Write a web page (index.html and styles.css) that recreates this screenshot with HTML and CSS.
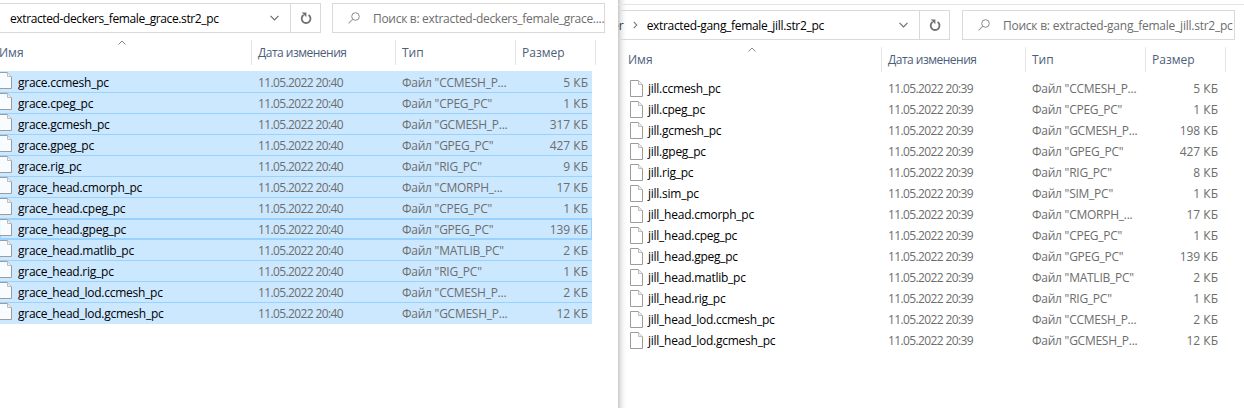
FILE: index.html
```html
<!DOCTYPE html>
<html lang="ru">
<head>
<meta charset="utf-8">
<title>Explorer</title>
<link rel="stylesheet" href="styles.css">
</head>
<body>
<svg class="defs" width="0" height="0" aria-hidden="true"><symbol id="file" viewBox="0 0 13 17"><path d="M.5 .5H8.5L12.5 4.5V16.5H.5Z" fill="#fff" fill-opacity=".85" stroke="#9c9c9c"/><path d="M8.5 .5V4.5H12.5" fill="#f0f0f0" stroke="#bdbdbd"/></symbol></svg>
<main class="desk">
<section class="win win-left">
  <div class="toolbar">
    <div class="addr"><span class="path">extracted-deckers_female_grace.str2_pc</span>
      <svg class="chev" width="9" height="6" viewBox="0 0 9 6"><path d="M.5 .8 4.5 4.8 8.5 .8" fill="none" stroke="#6d6d6d" stroke-width="1.2"/></svg></div>
    <div class="refresh"><svg width="12" height="13" viewBox="0 0 12 13"><path d="M3.6 3A4.4 4.4 0 1 0 8.6 3" fill="none" stroke="#707070" stroke-width="1.8"/><path d="M1.8 .6H6.4V5.2Z" fill="#707070"/></svg></div>
    <div class="search"><svg class="lens" width="12" height="12" viewBox="0 0 12 12"><circle cx="7.5" cy="4.5" r="3.8" fill="none" stroke="#8a8a8a"/><path d="M4.8 7.2 .6 11.4" stroke="#b09a9a" stroke-width="1.1"/></svg><span class="hint">Поиск в: extracted-deckers_female_grace....</span></div>
  </div>
  <div class="head">
    <span class="h h-name">Имя<svg class="sort" width="8" height="5" viewBox="0 0 8 5"><path d="M.5 4.5 4 1 7.5 4.5" fill="none" stroke="#8a8a8a"/></svg></span><span class="h h-date">Дата изменения</span><span class="h">Тип</span><span class="h">Размер</span>
  </div>
  <div class="list">
    <div class="row sel"><svg class="file"><use href="#file"/></svg><span class="n">grace.ccmesh_pc</span><span class="d">11.05.2022 20:40</span><span class="t">Файл "CCMESH_P...</span><span class="s">5 КБ</span></div>
    <div class="row sel"><svg class="file"><use href="#file"/></svg><span class="n">grace.cpeg_pc</span><span class="d">11.05.2022 20:40</span><span class="t">Файл "CPEG_PC"</span><span class="s">1 КБ</span></div>
    <div class="row sel"><svg class="file"><use href="#file"/></svg><span class="n">grace.gcmesh_pc</span><span class="d">11.05.2022 20:40</span><span class="t">Файл "GCMESH_P...</span><span class="s">317 КБ</span></div>
    <div class="row sel"><svg class="file"><use href="#file"/></svg><span class="n">grace.gpeg_pc</span><span class="d">11.05.2022 20:40</span><span class="t">Файл "GPEG_PC"</span><span class="s">427 КБ</span></div>
    <div class="row sel"><svg class="file"><use href="#file"/></svg><span class="n">grace.rig_pc</span><span class="d">11.05.2022 20:40</span><span class="t">Файл "RIG_PC"</span><span class="s">9 КБ</span></div>
    <div class="row sel"><svg class="file"><use href="#file"/></svg><span class="n">grace_head.cmorph_pc</span><span class="d">11.05.2022 20:40</span><span class="t">Файл "CMORPH_...</span><span class="s">17 КБ</span></div>
    <div class="row sel"><svg class="file"><use href="#file"/></svg><span class="n">grace_head.cpeg_pc</span><span class="d">11.05.2022 20:40</span><span class="t">Файл "CPEG_PC"</span><span class="s">1 КБ</span></div>
    <div class="row sel focus"><svg class="file"><use href="#file"/></svg><span class="n">grace_head.gpeg_pc</span><span class="d">11.05.2022 20:40</span><span class="t">Файл "GPEG_PC"</span><span class="s">139 КБ</span></div>
    <div class="row sel"><svg class="file"><use href="#file"/></svg><span class="n">grace_head.matlib_pc</span><span class="d">11.05.2022 20:40</span><span class="t">Файл "MATLIB_PC"</span><span class="s">2 КБ</span></div>
    <div class="row sel"><svg class="file"><use href="#file"/></svg><span class="n">grace_head.rig_pc</span><span class="d">11.05.2022 20:40</span><span class="t">Файл "RIG_PC"</span><span class="s">1 КБ</span></div>
    <div class="row sel"><svg class="file"><use href="#file"/></svg><span class="n">grace_head_lod.ccmesh_pc</span><span class="d">11.05.2022 20:40</span><span class="t">Файл "CCMESH_P...</span><span class="s">2 КБ</span></div>
    <div class="row sel"><svg class="file"><use href="#file"/></svg><span class="n">grace_head_lod.gcmesh_pc</span><span class="d">11.05.2022 20:40</span><span class="t">Файл "GCMESH_P...</span><span class="s">12 КБ</span></div>
  </div>
</section>
<section class="win win-right">
  <div class="toolbar">
    <div class="addr"><span class="crumb">er</span><svg class="crumb-sep" width="5" height="8" viewBox="0 0 5 8"><path d="M.8 .8 3.8 4 .8 7.2" fill="none" stroke="#7a7a7a" stroke-width="1.1"/></svg><span class="path">extracted-gang_female_jill.str2_pc</span>
      <svg class="chev" width="9" height="6" viewBox="0 0 9 6"><path d="M.5 .8 4.5 4.8 8.5 .8" fill="none" stroke="#6d6d6d" stroke-width="1.2"/></svg></div>
    <div class="refresh"><svg width="12" height="13" viewBox="0 0 12 13"><path d="M3.6 3A4.4 4.4 0 1 0 8.6 3" fill="none" stroke="#707070" stroke-width="1.8"/><path d="M1.8 .6H6.4V5.2Z" fill="#707070"/></svg></div>
    <div class="search"><svg class="lens" width="12" height="12" viewBox="0 0 12 12"><circle cx="7.5" cy="4.5" r="3.8" fill="none" stroke="#8a8a8a"/><path d="M4.8 7.2 .6 11.4" stroke="#b09a9a" stroke-width="1.1"/></svg><span class="hint">Поиск в: extracted-gang_female_jill.str2_pc</span></div>
  </div>
  <div class="head">
    <span class="h h-name">Имя<svg class="sort" width="8" height="5" viewBox="0 0 8 5"><path d="M.5 4.5 4 1 7.5 4.5" fill="none" stroke="#8a8a8a"/></svg></span><span class="h h-date">Дата изменения</span><span class="h">Тип</span><span class="h">Размер</span>
  </div>
  <div class="list">
    <div class="row"><svg class="file"><use href="#file"/></svg><span class="n">jill.ccmesh_pc</span><span class="d">11.05.2022 20:39</span><span class="t">Файл "CCMESH_P...</span><span class="s">5 КБ</span></div>
    <div class="row"><svg class="file"><use href="#file"/></svg><span class="n">jill.cpeg_pc</span><span class="d">11.05.2022 20:39</span><span class="t">Файл "CPEG_PC"</span><span class="s">1 КБ</span></div>
    <div class="row"><svg class="file"><use href="#file"/></svg><span class="n">jill.gcmesh_pc</span><span class="d">11.05.2022 20:39</span><span class="t">Файл "GCMESH_P...</span><span class="s">198 КБ</span></div>
    <div class="row"><svg class="file"><use href="#file"/></svg><span class="n">jill.gpeg_pc</span><span class="d">11.05.2022 20:39</span><span class="t">Файл "GPEG_PC"</span><span class="s">427 КБ</span></div>
    <div class="row"><svg class="file"><use href="#file"/></svg><span class="n">jill.rig_pc</span><span class="d">11.05.2022 20:39</span><span class="t">Файл "RIG_PC"</span><span class="s">8 КБ</span></div>
    <div class="row"><svg class="file"><use href="#file"/></svg><span class="n">jill.sim_pc</span><span class="d">11.05.2022 20:39</span><span class="t">Файл "SIM_PC"</span><span class="s">1 КБ</span></div>
    <div class="row"><svg class="file"><use href="#file"/></svg><span class="n">jill_head.cmorph_pc</span><span class="d">11.05.2022 20:39</span><span class="t">Файл "CMORPH_...</span><span class="s">17 КБ</span></div>
    <div class="row"><svg class="file"><use href="#file"/></svg><span class="n">jill_head.cpeg_pc</span><span class="d">11.05.2022 20:39</span><span class="t">Файл "CPEG_PC"</span><span class="s">1 КБ</span></div>
    <div class="row"><svg class="file"><use href="#file"/></svg><span class="n">jill_head.gpeg_pc</span><span class="d">11.05.2022 20:39</span><span class="t">Файл "GPEG_PC"</span><span class="s">139 КБ</span></div>
    <div class="row"><svg class="file"><use href="#file"/></svg><span class="n">jill_head.matlib_pc</span><span class="d">11.05.2022 20:39</span><span class="t">Файл "MATLIB_PC"</span><span class="s">2 КБ</span></div>
    <div class="row"><svg class="file"><use href="#file"/></svg><span class="n">jill_head.rig_pc</span><span class="d">11.05.2022 20:39</span><span class="t">Файл "RIG_PC"</span><span class="s">1 КБ</span></div>
    <div class="row"><svg class="file"><use href="#file"/></svg><span class="n">jill_head_lod.ccmesh_pc</span><span class="d">11.05.2022 20:39</span><span class="t">Файл "CCMESH_P...</span><span class="s">2 КБ</span></div>
    <div class="row"><svg class="file"><use href="#file"/></svg><span class="n">jill_head_lod.gcmesh_pc</span><span class="d">11.05.2022 20:39</span><span class="t">Файл "GCMESH_P...</span><span class="s">12 КБ</span></div>
  </div>
</section>
</main>
</body>
</html>
```

FILE: styles.css
```css
* { box-sizing: border-box; }
html, body { margin: 0; height: 100%; background: #fff; overflow: hidden; }
body { font-family: "Open Sans", "Noto Sans", sans-serif; font-size: 12px; color: #000; }
.defs { position: absolute; }
.desk { display: flex; width: 1244px; height: 408px; }
.win { height: 408px; overflow: hidden; position: relative; }
.win-left { width: 618px; padding-top: 3px; }
.win-right {
  width: 626px; padding-top: 10px;
  background: linear-gradient(90deg, #c9c9c9 0, #e8e8e8 3px, #f8f8f8 6px, #fff 9px);
}
.win-right::before {
  content: ""; position: absolute; left: 0; right: 0; top: 4px; height: 1px; background: #e3e3e3;
}
.toolbar { display: flex; height: 30px; }
.addr {
  display: flex; align-items: center; height: 30px;
  border: 1px solid #d9d9d9; border-left: 0; font-size: 12px;
}
.win-left .addr { width: 291px; padding-left: 10px; }
.win-right .addr { width: 302px; }
.crumb { color: #333; margin-left: -6px; margin-right: 9px; }
.crumb-sep { margin-right: 9px; flex: none; }
.path { flex: 1; white-space: nowrap; letter-spacing: -.38px; }
.win-right .path { letter-spacing: -.32px; }
.chev { margin-right: 11px; flex: none; }
.refresh {
  width: 30px; height: 30px; display: flex; align-items: center; justify-content: center;
  border: 1px solid #d9d9d9; border-left: 0;
}
.search {
  display: flex; align-items: center; height: 30px; width: 273px; margin-left: 12px;
  border: 1px solid #d9d9d9; color: #6d6d6d; white-space: nowrap; overflow: hidden;
}
.win-left .search { margin-left: 11px; }
.hint { letter-spacing: -.3px; }
.win-right .hint { letter-spacing: -.24px; }
.lens { margin: 0 13px 0 15px; flex: none; }
.head { display: grid; height: 25px; margin-top: 7px; color: #4c607a; }
.win-right .head { padding-left: 10px; }
.head, .win-left .row { grid-template-columns: 252px 144px 120px 80px; }
.win-right .head, .win-right .row { grid-template-columns: 254px 144px 120px 80px; }
.h { display: flex; align-items: center; padding-left: 6px; border-right: 1px solid #e5e5e5; position: relative; }
.h-name { padding-left: 0; }
.h-date { letter-spacing: -.5px; }
.win-left .h-name { margin-left: -1px; }
.sort { position: absolute; top: 0; left: 120px; }
.win-left .sort { left: 119px; }
.list { margin-top: 6px; }
.win-left .list { width: 592px; background: #cce8ff; padding-top: 1px; }
.win-right .list { padding-left: 10px; width: 610px; }
.row { display: grid; height: 21px; align-items: center; white-space: nowrap; position: relative; }
.row.sel { background: #cce8ff; border-bottom: 1px solid #99d1ff; }
.row.sel:last-child { border-bottom: 0; }
.row.focus { box-shadow: 0 -1px 0 #99d1ff, inset 0 0 0 1px #99d1ff; }
.n { padding-left: 20px; letter-spacing: -.25px; }
.win-left .n { padding-left: 18px; }
.d { padding-left: 6px; color: #6d6d6d; letter-spacing: -.62px; }
.t { padding-left: 6px; color: #6d6d6d; letter-spacing: -.25px; }
.s { text-align: right; padding-right: 8px; color: #6d6d6d; }
.file { position: absolute; width: 13px; height: 17px; top: 2px; left: 2px; }
.win-left .file { left: -1px; top: 0; }
```
